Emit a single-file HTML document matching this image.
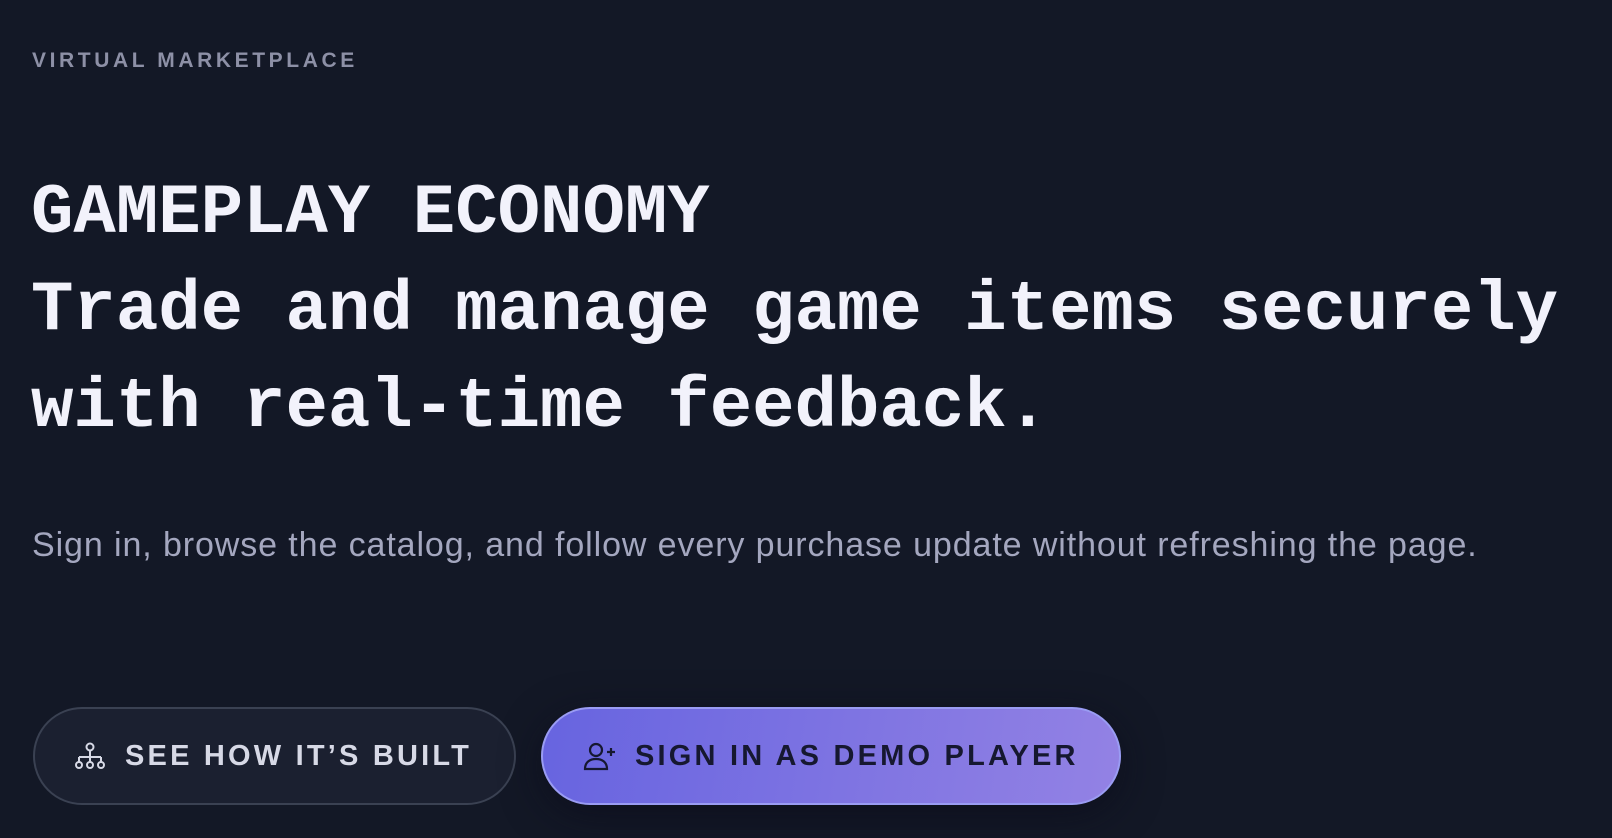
<!DOCTYPE html>
<html><head><meta charset="utf-8"><style>
html,body{margin:0;padding:0;width:1612px;height:838px;overflow:hidden;background:#131826;}
body{position:relative;font-family:"Liberation Sans",sans-serif;}
.eyebrow{position:absolute;left:32px;top:49px;font-size:21px;letter-spacing:3.6px;color:#8d90a6;font-weight:bold;}
.h{position:absolute;left:31px;top:166px;font-family:"Liberation Mono",monospace;font-weight:bold;font-size:70.7px;line-height:97px;color:#f2f2fb;white-space:nowrap;}
.sub{position:absolute;left:32px;top:526px;font-size:34px;letter-spacing:0.9px;color:#a4a7bf;white-space:nowrap;}
.btn{position:absolute;top:707px;height:98px;box-sizing:border-box;border-radius:49px;display:flex;align-items:center;font-weight:bold;font-size:29px;letter-spacing:3.2px;white-space:nowrap;}
.b1{left:33px;width:483px;background:#1b2030;border:2px solid #3a4152;color:#d7d9e6;padding-left:38px;}
.b2{left:541px;width:580px;background:linear-gradient(100deg,#6764e0,#9382e4);border:2px solid #9a9cf3;color:#161830;padding-left:40px;box-shadow:0 10px 40px rgba(10,10,25,.6);}
.btn svg{margin-right:18px}
</style></head><body>
<div class="eyebrow">VIRTUAL MARKETPLACE</div>
<div class="h">GAMEPLAY ECONOMY<br>Trade and manage game items securely<br>with real-time feedback.</div>
<div class="sub">Sign in, browse the catalog, and follow every purchase update without refreshing the page.</div>
<div class="btn b1"><svg width="34" height="28" viewBox="0 0 34 28" fill="none" stroke="#d7d9e6" stroke-width="2"><circle cx="17" cy="5" r="3.5"/><path d="M17 9v6M6 15h22M6 15v5M17 15v5M28 15v5"/><circle cx="6" cy="23" r="3"/><circle cx="17" cy="23" r="3"/><circle cx="28" cy="23" r="3"/></svg>SEE HOW IT’S BUILT</div>
<div class="btn b2"><svg width="34" height="30" viewBox="0 0 34 30" fill="none" stroke="#161830" stroke-width="2.2"><circle cx="13" cy="9" r="6"/><path d="M2 28c0-7 5-10 11-10s11 3 11 10z"/><path d="M28 7v8M24 11h8"/></svg>SIGN IN AS DEMO PLAYER</div>
</body></html>
